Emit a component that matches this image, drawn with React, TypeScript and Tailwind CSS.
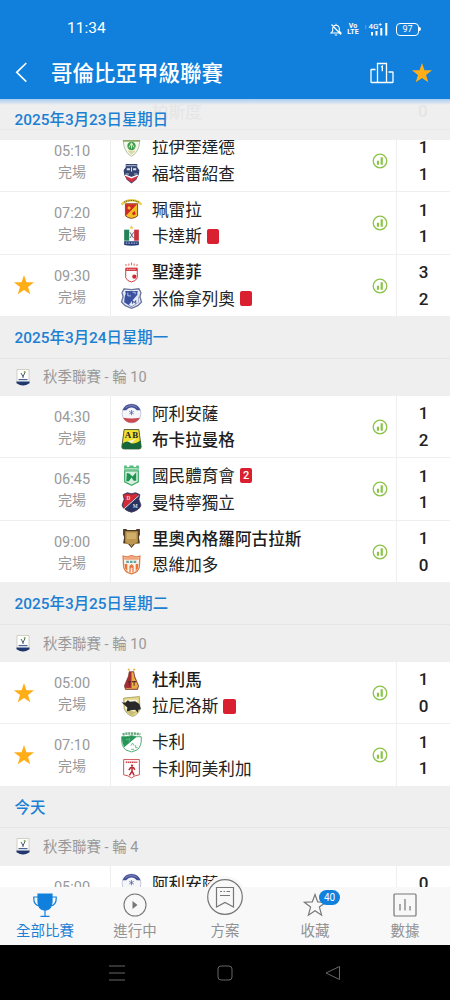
import type { ReactNode } from 'react';

interface Team {
  name: string;
  crest: string;
  score: number;
  winner?: boolean;
  redCards?: number;
}

interface Match {
  time: string;
  favourite?: boolean;
  teams: Team[];
}

interface Round {
  date: string;
  league: string;
  matches: Match[];
}

const firstMatches: Match[] = [
  {
    time: '05:10',
    teams: [
      { name: '拉伊奎達德', crest: 'equidad', score: 1 },
      { name: '福塔雷紹查', crest: 'fortaleza', score: 1 },
    ],
  },
  {
    time: '07:20',
    teams: [
      { name: '珮雷拉', crest: 'pereira', score: 1 },
      { name: '卡達斯', crest: 'caldas', score: 1, redCards: 1 },
    ],
  },
  {
    time: '09:30',
    favourite: true,
    teams: [
      { name: '聖達菲', crest: 'santafe', score: 3, winner: true },
      { name: '米倫拿列奧', crest: 'millonarios', score: 2, redCards: 1 },
    ],
  },
];

const rounds: Round[] = [
  {
    date: '2025年3月24日星期一',
    league: '秋季聯賽 - 輪 10',
    matches: [
      {
        time: '04:30',
        teams: [
          { name: '阿利安薩', crest: 'alianza', score: 1 },
          { name: '布卡拉曼格', crest: 'bucaramanga', score: 2, winner: true },
        ],
      },
      {
        time: '06:45',
        teams: [
          { name: '國民體育會', crest: 'nacional', score: 1, redCards: 2 },
          { name: '曼特寧獨立', crest: 'medellin', score: 1 },
        ],
      },
      {
        time: '09:00',
        teams: [
          { name: '里奧內格羅阿古拉斯', crest: 'rionegro', score: 1, winner: true },
          { name: '恩維加多', crest: 'envigado', score: 0 },
        ],
      },
    ],
  },
  {
    date: '2025年3月25日星期二',
    league: '秋季聯賽 - 輪 10',
    matches: [
      {
        time: '05:00',
        favourite: true,
        teams: [
          { name: '杜利馬', crest: 'tolima', score: 1, winner: true },
          { name: '拉尼洛斯', crest: 'llaneros', score: 0, redCards: 1 },
        ],
      },
      {
        time: '07:10',
        favourite: true,
        teams: [
          { name: '卡利', crest: 'cali', score: 1 },
          { name: '卡利阿美利加', crest: 'america', score: 1 },
        ],
      },
    ],
  },
  {
    date: '今天',
    league: '秋季聯賽 - 輪 4',
    matches: [
      {
        time: '05:00',
        teams: [
          { name: '阿利安薩', crest: 'alianza', score: 0 },
        ],
      },
    ],
  },
];

const SHIELD = 'M2 2 Q6 3.5 10 1.5 Q14 3.5 18 2 L17.5 12 Q17 17 10 19 Q3 17 2.5 12 Z';

const crests: Record<string, ReactNode> = {
  equidad: (
    <>
      <path d="M2 2.5h16q-.5 12-8 16q-7.500-4-8-16z" fill="#f4f7ee" stroke="#a9b98f" strokeWidth=".8" />
      <path d="M2 2h16v2.500H2z" fill="#8aa765" />
      <circle cx="10" cy="8.500" r="4" fill="#3f9a4c" />
      <path d="M7.500 10 10 5.500 12.500 10M10 6v5" stroke="#d9efc9" strokeWidth=".9" fill="none" />
      <path d="M6 13h8l-4 4z" fill="#dcd9a5" />
    </>
  ),
  fortaleza: (
    <>
      <path d="M4.500 1h11v3l2 3-.5 4-2.500 5-4.500 3.500L5.500 16 3 11l-.5-4 2-3z" fill="#34446f" />
      <path d="M5 2.500h10" stroke="#9da9c4" strokeWidth="1.200" />
      <path d="M5.500 5h3v2h-3zM11.500 5h3v2h-3zM9.500 4h1v4h-1z" fill="#dfe4ef" />
      <path d="M4.500 10.500h3M12.500 10.500h3" stroke="#b9c2d6" strokeWidth="1" />
      <path d="M4 12l6 2.500 6-2.500-1.500 3.500L10 18.500l-4.500-3z" fill="#d23145" />
      <path d="M4 11.500 10 14l6-2.500" stroke="#fff" strokeWidth="1.200" fill="none" />
    </>
  ),
  pereira: (
    <>
      <path d="M.5 5.500Q4 1.200 10 1.200T19.500 5.500" fill="none" stroke="#ead04d" strokeWidth="2.200" />
      <path d="M3 3Q10-.3 17 3" fill="none" stroke="#6f5921" strokeWidth="1" strokeDasharray="1 .7" />
      <path d="M4.200 4.500h11.600v11.500q-2 2-5.800 2.500-3.800-.500-5.800-2.500z" fill="#f1bf24" stroke="#7b2f19" strokeWidth=".8" />
      <path d="M4.700 5h10.600L4.700 16z" fill="#cf2629" />
      <circle cx="7.700" cy="8.500" r="1.500" fill="#f1bf24" />
      <path d="M10.500 13.500 13 11.500l1 3-2.500 1z" fill="#cf2629" />
    </>
  ),
  caldas: (
    <>
      <path d="m10-.7.6 1.400 1.400.1-1 1 .3 1.400-1.300-.8-1.300.8.300-1.400-1-1 1.400-.1z" fill="#e8cf5c" />
      <path d="M3 3.500h5V14H3z" fill="#25835b" />
      <path d="M8 3.500h4.500V14H8z" fill="#f4f5f5" />
      <path d="M12.500 3.500H17V14h-4.500z" fill="#c9313b" />
      <path d="M8.500 6 12 11.500M12 6l-3.500 5.500" stroke="#516579" strokeWidth=".9" />
      <path d="M3 14.500h14v3.500q-7 1.500-14 0z" fill="#253c79" />
      <path d="M4.500 16.300h11" stroke="#a9b6d5" strokeWidth="1" strokeDasharray="1.500 1" />
    </>
  ),
  santafe: (
    <>
      <path d="M5 4 4.500 2M7.500 3.500v-2M10 3V.5M12.500 3.500v-2M15 4l.5-2" stroke="#df6a61" strokeWidth="1" />
      <path d="M4.500 6h11v9q-1.500 3.500-5.500 4-4-.5-5.500-4z" fill="#fff" stroke="#c73838" strokeWidth=".9" />
      <path d="M4.500 5.500h11v3h-11z" fill="#d5333b" />
      <path d="M5.500 7h9" stroke="#fff" strokeWidth=".8" strokeDasharray="1 .8" />
      <circle cx="12.700" cy="14" r="2" fill="#cf2933" />
    </>
  ),
  millonarios: (
    <>
      <path d="M3 .8 10 1.500l7-.7 2 3.500-1 4 1.500 5-3.500 3.500-6 2.500-6-2.500-3.500-3.500 1.500-5-1-4z" fill="#e4e8f2" stroke="#6b779b" strokeWidth="1.300" />
      <path d="M4 2.800h12l-.5 2.500 1 3.200.5 5-7 4.500-7-4.500.5-5 1-3.200z" fill="#3a51a1" />
      <path d="M7.500 16 16 6l.8 7.500-6.800 4z" fill="#e6e9f3" />
      <path d="M6.500 4.500v3h3M11 4h2.500v2" stroke="#b6c0df" strokeWidth=".9" fill="none" />
      <path d="M11 15v-3l1.500 2 1.500-2v3" stroke="#34498f" strokeWidth=".9" fill="none" />
    </>
  ),
  alianza: (
    <>
      <circle cx="10" cy="10" r="9" fill="#f5f6fa" stroke="#b4b7cc" strokeWidth=".7" />
      <path d="M1.500 7A9 9 0 0 1 18.500 7L15 7A6 6 0 0 0 5 7z" fill="#45509b" />
      <path d="M2 14A9 9 0 0 0 18 14Q10 15.500 2 14z" fill="#cb4951" />
      <path d="M4.500 4.500Q10 .5 15.500 4.500" stroke="#cdd1e6" strokeWidth=".8" strokeDasharray="1 1" fill="none" />
      <path d="M10 6.700v5M7.800 7.900l4.400 2.600M7.800 10.500l4.400-2.600" stroke="#5561a3" strokeWidth=".7" />
    </>
  ),
  bucaramanga: (
    <>
      <path d="M3 .5h14l2.200 16.500q0 2-2 2H2.800q-2 0-2-2z" fill="#f1df31" stroke="#394b26" strokeWidth=".8" />
      <path d="M1.200 14Q6 10.500 9 13t9.600-2l.6 6q0 2-2 2H2.800q-2 0-2-2z" fill="#17673b" />
      <path d="M6 11.500l3.500-.5 5-2-4.500 4.500z" fill="#f4f4df" />
      <text x="10.500" y="8.500" textAnchor="middle" fontSize="8.500" fontWeight="bold" fontFamily="Liberation Serif, serif" letterSpacing="1" fill="#222">
        AB
      </text>
    </>
  ),
  nacional: (
    <>
      <path d="M3 .5h2.500V2H8V.5h4V2h2.500V.5H17v4H3z" fill="#54ba7b" />
      <path d="M3.500 5.500h13V16L10 19.300 3.500 16z" fill="#d7f0df" stroke="#45ac6c" strokeWidth="1.200" />
      <path d="M5.500 7.500 8 8l3 3 3.500-4v8H12l-2-3-2.500 3.500H5z" fill="#1f9451" />
      <path d="M4 3.300h12" stroke="#c9ead4" strokeWidth=".8" />
    </>
  ),
  medellin: (
    <>
      <path d="M2 2.500 6 .7l4 1 4-1 4 1.800-1 4.500 2 5.500q-1 4.500-9 6.800-8-2.300-9-6.800L3 7z" fill="#26345f" stroke="#4a3650" strokeWidth=".8" />
      <path d="M2.500 3 6 1.500l4 1 4-1 2.500 1.500L3 15.500 1.800 12.500 3.600 7z" fill="#d42c37" />
      <path d="M3 16 17 3.500" stroke="#f4e5e8" strokeWidth=".9" />
      <text x="7" y="7.500" textAnchor="middle" fontSize="5" fontWeight="bold" fontFamily="Liberation Serif, serif" fill="#f8d7d7">
        D
      </text>
      <text x="13.500" y="15" textAnchor="middle" fontSize="5" fontWeight="bold" fontFamily="Liberation Serif, serif" fill="#d9deef">
        M
      </text>
    </>
  ),
  rionegro: (
    <>
      <path d="M2 1h3l1 1h8l1-1h3v5.500l-1 2 1 6-5 1-3 3.500-3-3.500-5-1 1-6-1-2z" fill="#4d3b24" />
      <path d="M4 3h12v10.500l-6 2-6-2z" fill="#bd9650" />
      <path d="M5.500 4.500h9v6h-9z" fill="#d0b069" />
      <path d="M3.500 14.500h5L10 17l1.500-2.500h5" stroke="#c4a05a" strokeWidth="1" fill="none" />
    </>
  ),
  envigado: (
    <>
      <path d={SHIELD} fill="#f8f2e9" stroke="#df7a45" strokeWidth="1.200" />
      <path d="M3 3.500Q10 1 17 3.500V5.500H3z" fill="#f0a57c" />
      <path d="M5 7.500h10" stroke="#65a4a0" strokeWidth="2" strokeDasharray="2.500 1" />
      <path d="M3.500 9.500H6v6.500L4 14zM8 11.500 10 9.500l2 2v6h-1.200v-4.500H9.200v4.500H8zM14 9.500h2.500l-.5 4.500-2 2z" fill="#e77439" />
    </>
  ),
  tolima: (
    <>
      <path d="m7.500-1 .5 1 1 .1-.8.7.3 1-1-.6-1 .6.3-1-.8-.7 1-.1zM12.500-1l.5 1 1 .1-.8.700.3 1-1-.6-1 .6.300-1-.8-.700 1-.1z" fill="#e4b44a" />
      <path d="M7.800 2.500h4.400l.8 4.500 3.800 9-1 3.500H4.200l-1-3.500L7 7z" fill="#a42e32" stroke="#7b322c" strokeWidth=".6" />
      <path d="M10 3h1.800l.7 4.500 3.800 8.500-.8 2H10z" fill="#e5af43" />
      <path d="M6.500 12h3M8 12v4M10.500 12h4M12.500 12v4" stroke="#5c2b27" strokeWidth="1" />
      <path d="M4.500 18.500h11" stroke="#dba34a" strokeWidth=".9" />
    </>
  ),
  llaneros: (
    <>
      <path d="M2.500 2 17.500.5 18 12q-1 5.500-7 7.500-6-2-8-7.500z" fill="#e4d788" stroke="#8a824e" strokeWidth=".6" />
      <path d="M4 3.500h11.500l-.5 8-5 6q-5-2-6-7z" fill="#f6f3df" />
      <path d="M.5 6 4 6.500 6.500 4l2 1.500 5-.5 4 2.500 1.500 5-2.500.500-.5 3-2.500-3-4 .5-4 2 .5-4.500z" fill="#292929" />
      <path d="M5 14.500 9.500 14l5 1.500-4.500 3z" fill="#c9bd75" />
    </>
  ),
  cali: (
    <>
      <path d="M.7 4.500q4 .5 9.300-1 5.300 1.500 9.300 1 .7 9-3.800 12.500l-5.500 2-5.500-2Q0 13.500.7 4.500z" fill="#fff" stroke="#46a56c" strokeWidth=".9" />
      <path d="M.7 4.500q4 .5 9.300-1l5 1L3 14.500Q.8 10 .7 4.500z" fill="#259656" />
      <path d="M1.500 2.200Q10 .5 18.500 2.200" stroke="#65a77c" strokeWidth="2.400" strokeDasharray="2 .7" fill="none" />
      <path d="M4.500 7.500 8.500 6.500l-1 3M9.500 13l1.500-2.500 1.500 2.500M14 12.500V15h2M9.500 16.500h3" stroke="#66b689" strokeWidth=".9" fill="none" />
    </>
  ),
  america: (
    <>
      <path d="M2.500 1.500h15V16q-4.500.5-7.500 3-3-2.500-7.500-3z" fill="#fff" stroke="#cc4b50" strokeWidth=".9" />
      <path d="M4.500 4h11" stroke="#cb3c42" strokeWidth="1.300" strokeDasharray="1.500 .5" />
      <circle cx="10.500" cy="7.300" r="1.100" fill="#bb2830" />
      <path d="M10.500 8.500v4l2 4M10.500 12.500 8 16.500M7.500 11.500 9 9.300h3l1.200 2" stroke="#bb2830" strokeWidth="1.400" fill="none" />
    </>
  ),
};

const Crest = ({ id }: { id: string }) => (
  <svg viewBox="0 0 20 20" className="h-[21px] w-[21px] shrink-0 overflow-visible">
    {crests[id]}
  </svg>
);

const Star = ({ className }: { className: string }) => (
  <svg viewBox="0 0 24 24" className={className}>
    <path d="m12 1 2.700 7.900 8.300.2-6.600 5 2.400 8.100L12 17.400l-6.800 4.800 2.400-8.100L1 9.100l8.300-.2z" fill="#ffae18" />
  </svg>
);

const LeagueLogo = () => (
  <svg viewBox="0 0 14 17" className="h-[17px] w-[14px]">
    <path d="M1 .5h12v13q-3 2-6 2.500-3-.500-6-2.500z" fill="#fff" stroke="#c7c5b5" strokeWidth=".8" />
    <path d="M5 4 7 7.500 9 3.500M7 7v2" stroke="#4a5f6d" strokeWidth="1" fill="none" />
    <circle cx="8.700" cy="3" r="1" fill="#7da94d" />
    <path d="M2.500 10.600h9" stroke="#4d6594" strokeWidth="1.300" />
    <path d="M.5 12.500h13v1.800Q10 16.500 7 16.500T.5 14.300z" fill="#1f376d" />
  </svg>
);

const StatsIcon = () => (
  <svg viewBox="0 0 16 16" className="h-4 w-4">
    <circle cx="8" cy="8" r="6.800" fill="none" stroke="#8bc34a" strokeWidth="1.300" />
    <path d="M4.900 7.800H7v3.900H4.900zM8.600 4.300h2.200v7.400H8.600z" fill="#8bc34a" />
  </svg>
);

const StatusBar = () => (
  <div className="flex h-[46px] items-center pt-[12px] pr-[29px] pl-[67px] text-white">
    <span className="flex-1 text-[15.500px] leading-none">11:34</span>
    <div className="flex items-center">
      <svg viewBox="0 0 12 13" className="h-[13px] w-3" fill="none" stroke="#fff" strokeWidth="1.100">
        <path d="M1 10h10L9.300 8V5.500Q9 2.300 6 2.200T2.700 5.500V8zM1.500 1.500l9.500 10M4.800 12h2.400M6 2V.7" />
      </svg>
      <div className="ml-[6px] flex w-[10px] flex-col items-center text-[7px] leading-[6px] font-bold">
        <span>Vo</span>
        <span>LTE</span>
      </div>
      <svg viewBox="0 0 24 14" className="ml-[6px] h-[14px] w-6 overflow-visible">
        <path d="M1 4h1.500M1 6h1.500" stroke="#fff" strokeWidth=".8" opacity=".5" />
        <text x="4.500" y="6.700" fontSize="8" fontWeight="500" fill="#fff">
          4G
        </text>
        <path d="M14.700 2.500h3M16.200 1v3" stroke="#fff" strokeWidth=".8" />
        <path d="M7 10h2v3.500H7zM11.500 9h2v4.500h-2zM16.300 6h2v7.500h-2zM21.300 1h2v12.500h-2z" fill="#fff" />
      </svg>
      <div className="ml-[8px] flex h-[13px] w-[23px] items-center justify-center rounded-[4px] border border-white text-[9px] leading-none">
        97
      </div>
      <div className="h-1 w-[2px] rounded-r bg-white" />
    </div>
  </div>
);

const Header = () => (
  <header className="h-[99px] shrink-0 bg-[#1080dc]">
    <StatusBar />
    <div className="flex h-[53px] items-center pr-[17px] pl-[15px]">
      <svg viewBox="0 0 13 22" className="h-[21px] w-[13px]" fill="none" stroke="#fff" strokeWidth="1.700">
        <path d="M11.500 1 1.500 10.800 11.500 20.500" />
      </svg>
      <h1 className="ml-[23px] flex-1 pt-[3px] text-[21.500px] leading-none font-medium text-white">
        哥倫比亞甲級聯賽
      </h1>
      <svg viewBox="0 0 24 22" className="h-[22px] w-6" fill="none" stroke="#fff" strokeWidth="1.300">
        <path d="M7.500 20.500V1.500h9v19M5.500 7.500h-4q-.500 0-.500.500v12q0 .500.500.500h21q.500 0 .500-.500V10.500q0-.500-.500-.500h-4M11 5l1.300-.8v5" />
      </svg>
      <Star className="ml-[17px] h-[22px] w-[22px]" />
    </div>
  </header>
);

const DateHeader = ({ date }: { date: string }) => (
  <div className="flex h-[40.500px] items-center bg-[#efefef] pt-[3px] pl-[14.500px] text-[15.400px] leading-none font-medium text-[#1b80d3]">
    {date}
  </div>
);

const RedCard = ({ count }: { count: number }) => (
  <span className="ml-[5px] flex h-[15px] w-[12.500px] items-center justify-center rounded-[2px] bg-[#da1f30] text-[11px] leading-none font-medium text-white">
    {count > 1 ? count : ''}
  </span>
);

const MatchRow = ({ match }: { match: Match }) => (
  <div className="flex h-[62.500px] border-b border-[#efefef] bg-white">
    <div className="flex w-12 items-center justify-center">
      {match.favourite && <Star className="h-[22px] w-[22px]" />}
    </div>
    <div className="flex w-12 flex-col items-center pt-[11px] text-[14.500px] leading-[21px] text-[#999]">
      <span>{match.time}</span>
      <span className="text-[14px]">完場</span>
    </div>
    <div className="ml-[14px] flex flex-1 items-start border-x border-[#efefef] pt-[4.500px] pr-2 pl-[9.500px]">
      <div className="flex flex-1 flex-col">
        {match.teams.map((team) => (
          <div key={team.name} className="flex h-[26.500px] items-center">
            <Crest id={team.crest} />
            <span
              className={
                team.winner
                  ? 'ml-[10.500px] pt-[3px] text-[16.600px] leading-none font-medium whitespace-nowrap text-[#1c1c1c]'
                  : 'ml-[10.500px] pt-[3px] text-[16.600px] leading-none whitespace-nowrap text-[#222]'
              }
            >
              {team.name}
            </span>
            {team.redCards && <RedCard count={team.redCards} />}
          </div>
        ))}
      </div>
      <div className="flex h-[53px] items-center">
        <StatsIcon />
      </div>
    </div>
    <div className="flex w-[53px] flex-col pt-[4.500px] text-center text-[17px] leading-[26.500px] font-medium text-[#222]">
      {match.teams.map((team) => (
        <span key={team.name}>{team.score}</span>
      ))}
    </div>
  </div>
);

const TabItem = ({ label, active, children }: { label: string; active?: boolean; children: ReactNode }) => (
  <div className="relative flex flex-1 flex-col items-center justify-between pt-[4px] pb-[5px]">
    <div className="flex h-7 items-center justify-center">{children}</div>
    <span
      className={
        active ? 'text-[14.500px] leading-[16px] text-[#1b80d3]' : 'text-[14.500px] leading-[16px] text-[#929292]'
      }
    >
      {label}
    </span>
  </div>
);

const TabBar = () => (
  <nav className="relative flex h-[58px] shrink-0 bg-[#f8f8f8]">
    <TabItem label="全部比賽" active>
      <svg viewBox="0 0 24 24" className="h-6 w-6" fill="none" stroke="#1080dc" strokeWidth="1.200">
        <path d="M5 1h14v8q-.5 7-5.500 8h-3Q5.500 16 5 9z" fill="#1080dc" />
        <path d="M5 4H.8q-.5 8 5.700 9M19 4h4.200q.5 8-5.700 9M12 17v6M7.500 23.300h9" />
      </svg>
    </TabItem>
    <TabItem label="進行中">
      <svg viewBox="0 0 24 24" className="h-6 w-6">
        <circle cx="12" cy="12" r="11" fill="none" stroke="#777" strokeWidth="1.100" />
        <path d="M9.500 8v8l5-4z" fill="#777" />
      </svg>
    </TabItem>
    <TabItem label="方案">
      <svg viewBox="0 0 42 42" className="absolute -top-[11px] h-[42px] w-[42px]" fill="none">
        <circle cx="21" cy="21" r="21" fill="#f8f8f8" />
        <circle cx="21" cy="21" r="17.300" stroke="#777" strokeWidth="1.200" />
        <path d="M12.500 11.500h17v19.500L21 26.500 12.500 31z" stroke="#777" strokeWidth="1.200" />
        <path d="M16 15.500h2M19.500 15.500h1.500M22.500 15.500h3.500M16 19.500h10" stroke="#777" strokeWidth="1.200" />
      </svg>
    </TabItem>
    <TabItem label="收藏">
      <svg viewBox="0 0 24 24" className="h-6 w-6" fill="none" stroke="#777" strokeWidth="1.200">
        <path d="m12 1.500 2.700 7.400 8 .3-6.300 4.900 2.200 8.100L12 17.800l-6.600 4.400 2.200-8.100L1.300 9.200l8-.3z" />
      </svg>
      <span className="absolute top-[3px] left-[49px] flex h-[15px] w-[21px] items-center justify-center rounded-full bg-[#1080dc] text-[10px] leading-none text-white">
        40
      </span>
    </TabItem>
    <TabItem label="數據">
      <svg viewBox="0 0 24 24" className="h-6 w-6" fill="none" stroke="#777" strokeWidth="1.200">
        <rect x="1" y="1" width="22" height="22" rx="1" />
        <path d="M7 11v6.500M12 6v11.500M17 13v4.500" />
      </svg>
    </TabItem>
  </nav>
);

const SystemNav = () => (
  <div className="flex h-[55px] shrink-0 items-center justify-center gap-[92px] bg-black">
    <svg viewBox="0 0 16 16" className="h-4 w-4" stroke="#666" strokeWidth="1">
      <path d="M0 1h16M0 8h16M0 15h16" />
    </svg>
    <svg viewBox="0 0 16 16" className="h-4 w-4" fill="none" stroke="#666">
      <rect x="1" y="1" width="14" height="14" rx="3" />
    </svg>
    <svg viewBox="0 0 16 16" className="h-4 w-4" fill="none" stroke="#666" strokeLinejoin="round">
      <path d="M14.500 1.500v13L1 8z" />
    </svg>
  </div>
);

const App = () => (
  <div className="flex h-[1000px] w-[450px] flex-col overflow-hidden bg-white font-['Roboto','Noto_Sans_CJK_TC',sans-serif]">
    <Header />
    {/* pinned date, the previous row still shows faintly through it */}
    <div className="relative h-[41px] shrink-0 overflow-hidden bg-[#efefef]">
      <div className="h-[6px] bg-linear-to-b from-[#a9cdee] to-[#efefef]" />
      <span className="absolute top-[6px] left-[152px] text-[16.600px] leading-none text-[#e5e5e5]">柏斯度</span>
      <span className="absolute top-[4px] left-[418px] text-[17px] leading-none font-medium text-[#e5e5e5]">0</span>
      <div className="absolute top-[30px] h-px w-full bg-[#e9e9e9]" />
      <span className="absolute top-[14px] left-[14.500px] text-[15.400px] leading-none font-medium text-[#1b80d3]">
        2025年3月23日星期日
      </span>
    </div>
    <main className="min-h-0 flex-1 overflow-hidden">
      <div className="-mt-[10.500px]">
        {firstMatches.map((match) => (
          <MatchRow key={match.time} match={match} />
        ))}
        {rounds.map((round) => (
          <section key={round.date}>
            <DateHeader date={round.date} />
            <div className="flex h-[38.200px] items-center border-t border-[#e6e6e6] bg-[#efefef] pl-4 text-[14.500px] leading-none text-[#999]">
              <LeagueLogo />
              <span className="ml-[13px] pt-[3px]">{round.league}</span>
            </div>
            {round.matches.map((match) => (
              <MatchRow key={match.time} match={match} />
            ))}
          </section>
        ))}
      </div>
    </main>
    <TabBar />
    <SystemNav />
  </div>
);

export default App;
